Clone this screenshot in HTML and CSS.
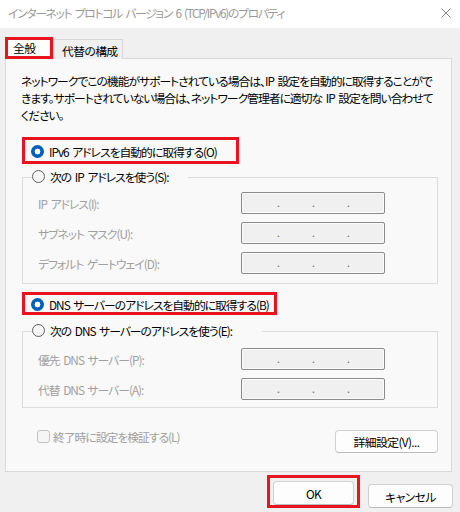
FILE: index.html
```html
<!DOCTYPE html>
<html lang="ja">
<head>
<meta charset="utf-8">
<link rel="stylesheet" href="styles.css">
</head>
<body>
<div class="titlebar">
  <span class="title">インターネット プロトコル バージョン 6 (TCP/IPv6)のプロパティ</span>
  <svg class="close" width="10" height="10" viewBox="0 0 10 10"><path d="M0.5 0.5 L9.5 9.5 M9.5 0.5 L0.5 9.5" stroke="#8a8a8a" stroke-width="1" fill="none"/></svg>
</div>
<div class="main">
  <div class="tabs">
    <div class="tab tab-active">全般</div>
    <div class="tab">代替の構成</div>
  </div>
  <div class="panel">
    <p class="desc">ネットワークでこの機能がサポートされている場合は、IP 設定を自動的に取得することがで<br>きます。サポートされていない場合は、ネットワーク管理者に適切な IP 設定を問い合わせて<br>ください。</p>

    <div class="mark mark-r1"><span class="radio radio-on"></span><span>IPv6 アドレスを自動的に取得する(O)</span></div>

    <fieldset class="group group-ip">
      <legend class="legend legend-ip"><span class="radio"></span>次の IP アドレスを使う(S):</legend>
      <div class="rows">
        <span class="lbl">IP アドレス(I):</span>
        <span class="ip"><span>.</span><span>.</span><span>.</span></span>
        <span class="lbl">サブネット マスク(U):</span>
        <span class="ip"><span>.</span><span>.</span><span>.</span></span>
        <span class="lbl">デフォルト ゲートウェイ(D):</span>
        <span class="ip"><span>.</span><span>.</span><span>.</span></span>
      </div>
    </fieldset>

    <div class="mark mark-r3"><span class="radio radio-on"></span><span>DNS サーバーのアドレスを自動的に取得する(B)</span></div>

    <fieldset class="group group-dns">
      <legend class="legend legend-dns"><span class="radio"></span>次の DNS サーバーのアドレスを使う(E):</legend>
      <div class="rows">
        <span class="lbl">優先 DNS サーバー(P):</span>
        <span class="ip"><span>.</span><span>.</span><span>.</span></span>
        <span class="lbl">代替 DNS サーバー(A):</span>
        <span class="ip"><span>.</span><span>.</span><span>.</span></span>
      </div>
    </fieldset>

    <div class="foot">
      <span class="check"><span class="box"></span>終了時に設定を検証する(L)</span>
      <button class="btn btn-adv">詳細設定(V)...</button>
    </div>
  </div>
  <div class="actions">
    <div class="mark mark-ok"><button class="btn btn-ok">OK</button></div>
    <button class="btn btn-cancel">キャンセル</button>
  </div>
</div>
</body>
</html>
```
FILE: styles.css
```css
html, body {
  margin: 0;
  padding: 0;
}
body {
  width: 460px;
  height: 512px;
  overflow: hidden;
  background: #f0f0f0;
  font-family: "Noto Sans CJK JP", "Noto Sans", sans-serif;
  font-size: 11.8px;
  line-height: 17px;
  letter-spacing: -1px;
  word-spacing: 2px;
  color: #000;
  font-feature-settings: "palt" 1;
}
.titlebar {
  height: 28px;
  box-sizing: border-box;
  background: #fff;
  display: flex;
  align-items: center;
  justify-content: space-between;
  padding: 0 9px 3px 8px;
}
.title {
  color: #999;
  white-space: nowrap;
  letter-spacing: -1.3px;
}
.close {
  display: block;
  margin-top: 1px;
}
.main {
  padding: 9px 0 0 5px;
}
.tabs {
  display: flex;
  align-items: flex-end;
  margin-bottom: -1px;
  position: relative;
  z-index: 1;
}
.tab {
  box-sizing: border-box;
  height: 20px;
  width: 70px;
  border: 1px solid #d9d9d9;
  border-bottom: none;
  background: #f0f0f0;
  display: flex;
  align-items: center;
  padding-left: 8px;
  padding-top: 1px;
  white-space: nowrap;
  letter-spacing: -0.6px;
}
.tab-active {
  width: 48px;
  height: 22px;
  border: 3px solid #e8141f;
  background: #fff;
  padding: 0 0 2px 5px;
}
.panel {
  box-sizing: border-box;
  width: 447px;
  height: 414px;
  border: 1px solid #d9d9d9;
  background: #f9f9f9;
  padding: 13px 13px 0 16px;
}
.desc {
  margin: 0 0 0 -1px;
  white-space: nowrap;
}
.mark {
  box-sizing: border-box;
  border: 3px solid #e8141f;
  display: flex;
  align-items: center;
  white-space: nowrap;
}
.mark-r1 {
  width: 217px;
  height: 27px;
  margin-top: 14px;
  padding-top: 2px;
}
.mark-r3 {
  width: 255px;
  height: 23px;
  margin-top: 8px;
  padding-top: 1px;
}
.radio {
  box-sizing: border-box;
  display: inline-block;
  flex: none;
  width: 13px;
  height: 13px;
  border-radius: 50%;
  border: 1px solid #5f5f5f;
  background: #f5f5f5;
  margin: 0 5px 0 6px;
}
.radio-on {
  border: none;
  background: radial-gradient(circle, #fff 0 2.6px, #005fb8 3.2px);
}
.group {
  margin: 4px 0 0 0;
  padding: 0;
  border: 1px solid #dcdcdc;
  min-width: 0;
}
.legend {
  display: flex;
  align-items: center;
  margin-left: 9px;
  padding: 0 20px 2px 0;
  white-space: nowrap;
}
.legend .radio {
  margin: 0 5px 0 0;
}
.legend-dns {
  padding-right: 30px;
}
.group-ip {
  padding: 5px 0 9px 0;
}
.group-dns {
  margin-top: 7px;
  padding: 7px 0 7px 0;
}
.rows {
  display: grid;
  grid-template-columns: 203px 144px;
  grid-auto-rows: 22px;
  row-gap: 8px;
  align-items: center;
  padding-left: 15px;
}
.lbl {
  color: #a0a0a0;
  white-space: nowrap;
}
.ip {
  box-sizing: border-box;
  height: 22px;
  border: 1px solid #8b8b8b;
  border-radius: 2px;
  background: #f0f0f0;
  box-shadow: inset 0 0 0 1px #fbfbfb;
  display: flex;
  padding-left: 19px;
  line-height: 18px;
  color: #6a7a8a;
  letter-spacing: 0;
}
.ip span {
  width: 35px;
  text-align: center;
}
.foot {
  display: flex;
  justify-content: space-between;
  align-items: flex-start;
  margin-top: 20px;
}
.check {
  display: flex;
  align-items: center;
  color: #a0a0a0;
  margin-left: 15px;
  white-space: nowrap;
}
.box {
  box-sizing: border-box;
  width: 13px;
  height: 13px;
  border: 1px solid #c2c2c2;
  border-radius: 3px;
  background: #f5f5f5;
  margin-right: 3px;
}
.btn {
  box-sizing: border-box;
  font: inherit;
  letter-spacing: -0.6px;
  word-spacing: inherit;
  color: #000;
  background: #fdfdfd;
  border: 1px solid #d0d0d0;
  border-bottom-color: #bcbcbc;
  border-radius: 4px;
  padding: 0;
  height: 24px;
  white-space: nowrap;
}
.btn-adv {
  width: 103px;
  height: 23px;
  margin-top: 2px;
}
.actions {
  display: flex;
  justify-content: flex-end;
  align-items: flex-end;
  gap: 8px;
  margin-top: 3px;
  padding-right: 7px;
}
.mark-ok {
  padding: 3px 3px 0 3px;
}
.btn-ok {
  width: 81px;
}
.btn-cancel {
  width: 85px;
}
```
